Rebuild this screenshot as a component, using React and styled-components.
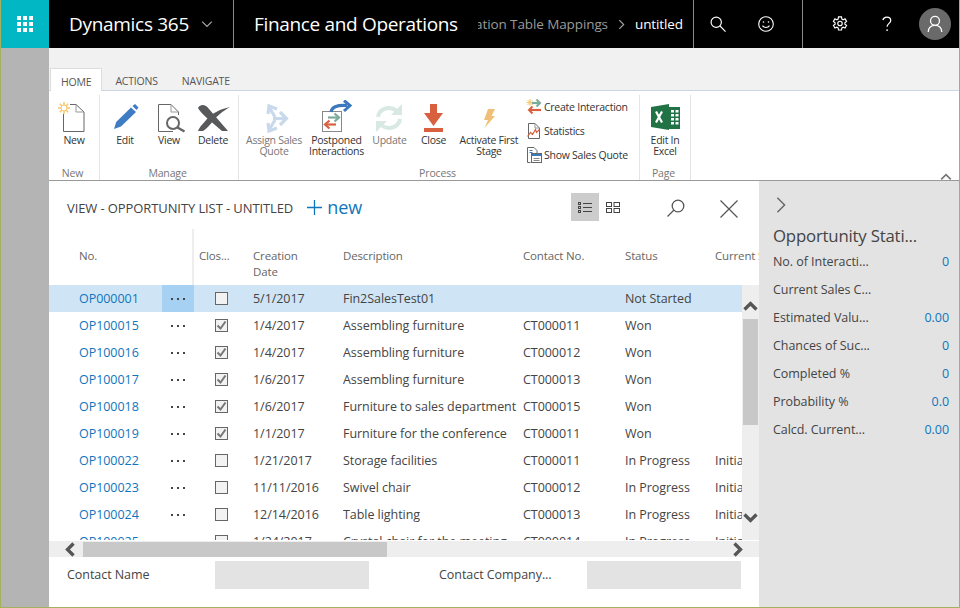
import React from 'react';
import styled, { createGlobalStyle } from 'styled-components';

const GlobalStyle = createGlobalStyle`
  html, body {
    margin: 0;
    padding: 0;
    background: #fff;
  }
  body {
    font-family: "Open Sans", "Noto Sans", "Liberation Sans", sans-serif;
    color: #444;
  }
`;

const Frame = styled.div`
  box-sizing: border-box;
  width: 960px;
  height: 608px;
  display: flex;
  flex-direction: column;
  overflow: hidden;
  border-left: 1px solid #a3b25f;
  border-right: 1px solid #a3b25f;
  border-bottom: 1px solid #a3b25f;
`;

/* top bar */
const TopBar = styled.header`
  display: flex;
  align-items: stretch;
  flex: 0 0 48px;
  background: #000;
  color: #fff;
  margin-right: -1px;
`;

const Waffle = styled.div`
  flex: 0 0 48px;
  background: #00b7c3;
  display: flex;
  align-items: center;
  justify-content: center;
`;

const AppName = styled.div`
  flex: 0 0 185px;
  box-sizing: border-box;
  padding-left: 20px;
  display: flex;
  align-items: center;
  gap: 12px;
  font-size: 19px;
  letter-spacing: -0.3px;
  border-right: 1px solid #8a8a8a;
`;

const ModuleName = styled.div`
  flex: 0 0 244px;
  padding-left: 20px;
  box-sizing: border-box;
  display: flex;
  align-items: center;
  font-size: 19px;
  letter-spacing: -0.33px;
  white-space: nowrap;
`;

const Crumbs = styled.div`
  flex: 0 0 216px;
  box-sizing: border-box;
  padding-right: 10px;
  display: flex;
  align-items: center;
  justify-content: flex-end;
  overflow: hidden;
  white-space: nowrap;
  font-size: 13.5px;
  letter-spacing: -0.1px;
  color: #9a9a9a;
  border-right: 1px solid #8a8a8a;
`;

const CrumbText = styled.span`
  flex: none;
`;

const CrumbSep = styled.span`
  flex: none;
  display: flex;
  margin: 0 8px 0 8px;
`;

const CrumbNow = styled.span`
  flex: none;
  color: #fff;
`;

const TopIcons = styled.div`
  flex: 0 0 109px;
  box-sizing: border-box;
  padding-left: 16px;
  display: flex;
  align-items: center;
  gap: 32px;
  border-right: 1px solid #8a8a8a;
`;

const TopTools = styled.div`
  flex: 1;
  display: flex;
  align-items: center;
`;

const TopSlot = styled.div`
  flex: 0 0 ${(p) => p.$w}px;
  display: flex;
  justify-content: center;
`;

const Avatar = styled.div`
  width: 32px;
  height: 32px;
  margin-left: 21px;
  border-radius: 50%;
  background: #6a6a6a;
  display: flex;
  align-items: center;
  justify-content: center;
`;

const Workspace = styled.div`
  flex: 1;
  display: flex;
  min-height: 0;
`;

const Rail = styled.div`
  flex: 0 0 48px;
  background: #b4b4b4;
`;

const Page = styled.div`
  flex: 1;
  display: flex;
  flex-direction: column;
  min-width: 0;
`;

/* ribbon */
const Ribbon = styled.section`
  flex: 0 0 133px;
  display: flex;
  flex-direction: column;
  box-sizing: border-box;
  background: #f1f1f1;
  padding-top: 20px;
`;

const Tabs = styled.div`
  flex: 0 0 23px;
  min-height: 0;
  box-sizing: border-box;
  display: flex;
  padding-left: 1px;
  border-bottom: 1px solid #cbd6e2;
`;

const Tab = styled.div`
  box-sizing: border-box;
  height: 23px;
  padding: 3px ${(p) => (p.$active ? '10px' : '11px')} 0 ${(p) => (p.$active ? '10px' : '13px')};
  display: flex;
  align-items: center;
  font-size: 10.5px;
  letter-spacing: -0.2px;
  color: #555;
  background: ${(p) => (p.$active ? '#fff' : 'transparent')};
  border-top: ${(p) => (p.$active ? '1px solid #ddd' : '0')};
  border-left: ${(p) => (p.$active ? '1px solid #ddd' : '0')};
  border-right: ${(p) => (p.$active ? '1px solid #ddd' : '0')};
`;

const RibbonBody = styled.div`
  flex: 1;
  min-height: 0;
  display: flex;
  background: #fff;
  border-bottom: 1px solid #999;
  padding-top: 4px;
`;

const Group = styled.div`
  box-sizing: border-box;
  flex: 0 0 ${(p) => p.$w}px;
  display: flex;
  flex-direction: column;
  border-right: 1px solid #e4e4e4;
`;

const GroupItems = styled.div`
  flex: 1;
  display: flex;
  padding-left: ${(p) => p.$pad || 0}px;
`;

const GroupName = styled.div`
  flex: 0 0 13px;
  padding-right: 3px;
  text-align: center;
  font-size: 10.5px;
  letter-spacing: -0.15px;
  line-height: 13px;
  color: #777;
`;

const BigButton = styled.div`
  flex: 0 0 ${(p) => p.$w}px;
  display: flex;
  flex-direction: column;
  align-items: center;
  font-size: 10.5px;
  letter-spacing: -0.28px;
  line-height: 11px;
  color: ${(p) => (p.$off ? '#777' : '#333')};
  text-align: center;
  white-space: nowrap;
`;

const BigIcon = styled.svg`
  display: block;
  flex: none;
  width: 36px;
  height: 34px;
  margin-top: 5px;
  margin-bottom: 1px;
`;

const Stack = styled.div`
  display: flex;
  flex-direction: column;
`;

const StackItem = styled.div`
  height: 24px;
  display: flex;
  align-items: center;
  gap: 2px;
  font-size: 10.5px;
  letter-spacing: -0.25px;
  color: #333;
  white-space: nowrap;
`;

const Collapse = styled.div`
  margin-left: auto;
  margin-right: 7px;
  align-self: flex-end;
  height: 14px;
`;

/* page body */
const Below = styled.div`
  flex: 1;
  display: flex;
  min-height: 0;
`;

const Content = styled.main`
  flex: 0 0 710px;
  display: flex;
  flex-direction: column;
  min-width: 0;
`;

const TitleBar = styled.div`
  flex: 0 0 48px;
  box-sizing: border-box;
  padding: 4px 16px 0 18px;
  display: flex;
  align-items: center;
`;

const ViewTitle = styled.div`
  margin-top: 2px;
  font-size: 13px;
  letter-spacing: -0.1px;
  color: #444;
  white-space: nowrap;
`;

const NewLink = styled.div`
  margin-left: 14px;
  display: flex;
  align-items: center;
  gap: 5px;
  color: #0f75bc;
  font-size: 18px;
  letter-spacing: -0.1px;
`;

const TitleTools = styled.div`
  margin-left: auto;
  display: flex;
  align-items: center;
`;

const ToolButton = styled.div`
  box-sizing: border-box;
  width: 28px;
  height: 28px;
  margin-left: ${(p) => p.$gap || 0}px;
  padding-top: ${(p) => p.$drop || 0}px;
  display: flex;
  align-items: center;
  justify-content: center;
  background: ${(p) => (p.$active ? '#ccc' : 'transparent')};
`;

const cols = '83px 32px 59px 90px 180px 102px 90px 1fr';

const GridHead = styled.div`
  flex: 0 0 56px;
  display: grid;
  grid-template-columns: ${cols};
  padding-left: 30px;
  overflow: hidden;
  font-size: 11.5px;
  letter-spacing: -0.15px;
  line-height: 16px;
  color: #666;
`;

const HeadCell = styled.div`
  box-sizing: border-box;
  padding-top: 19px;
  padding-left: ${(p) => p.$pad || 0}px;
  white-space: ${(p) => (p.$wrap ? 'normal' : 'nowrap')};
  overflow: hidden;
  border-right: ${(p) => (p.$divider ? '2px solid #eee' : '0')};
`;

const GridBody = styled.div`
  flex: 0 0 255px;
  display: flex;
  min-height: 0;
`;

const Rows = styled.div`
  flex: 1;
  min-width: 0;
  overflow: hidden;
`;

const Row = styled.div`
  display: grid;
  grid-template-columns: ${cols};
  height: 27px;
  padding-left: 30px;
  align-items: center;
  font-size: 12.5px;
  letter-spacing: -0.05px;
  color: #444;
  white-space: nowrap;
  background: ${(p) => (p.$selected ? '#cfe5f6' : 'transparent')};
`;

const Cell = styled.div`
  overflow: hidden;
`;

const RecordLink = styled.div`
  color: #0f75bc;
`;

const MoreCell = styled.div`
  height: 27px;
  display: flex;
  align-items: center;
  justify-content: center;
  gap: 4px;
  background: ${(p) => (p.$selected ? '#a6d1f2' : 'transparent')};
`;

const Dot = styled.span`
  width: 2px;
  height: 2px;
  background: #444;
`;

const CheckCell = styled.div`
  display: flex;
  padding-left: 21px;
`;

const CheckBox = styled.div`
  box-sizing: border-box;
  width: 13px;
  height: 13px;
  border: 1px solid #666;
  background: #f2f2f2;
  display: flex;
  align-items: center;
  justify-content: center;
`;

const VScroll = styled.div`
  flex: 0 0 17px;
  box-sizing: border-box;
  padding-bottom: 12px;
  background: #eee;
  display: flex;
  flex-direction: column;
  align-items: center;
`;

const ScrollArrow = styled.div`
  box-sizing: border-box;
  flex: 0 0 ${(p) => p.$size}px;
  padding-top: ${(p) => p.$drop || 0}px;
  display: flex;
  align-items: center;
  justify-content: center;
`;

const VThumb = styled.div`
  flex: 0 0 106px;
  width: 15px;
  background: #c8c8c8;
`;

const VTrack = styled.div`
  flex: 1;
`;

const HScroll = styled.div`
  flex: 0 0 17px;
  box-sizing: border-box;
  background: #eee;
  border-top: 1px solid #fff;
  display: flex;
  align-items: center;
  padding-left: 14px;
  padding-right: 14px;
`;

const HThumb = styled.div`
  flex: 0 0 304px;
  height: 15px;
  margin-left: 5px;
  margin-right: auto;
  background: #c8c8c8;
`;

const Footer = styled.div`
  flex: 1;
  box-sizing: border-box;
  padding: 4px 0 0 18px;
  display: flex;
  align-items: flex-start;
  font-size: 12.5px;
  letter-spacing: -0.05px;
  color: #444;
`;

const FieldLabel = styled.div`
  flex: 0 0 148px;
  line-height: 28px;
  white-space: nowrap;
`;

const FieldValue = styled.div`
  flex: 0 0 154px;
  height: 28px;
  background: #e3e3e3;
  margin-right: ${(p) => p.$gap || 0}px;
`;

/* right panel */
const Side = styled.aside`
  flex: 1;
  box-sizing: border-box;
  background: #e3e3e3;
  padding: 0 10px 0 14px;
`;

const SideToggle = styled.div`
  height: 46px;
  display: flex;
  align-items: center;
  margin-left: -1px;
  padding-top: 1px;
  box-sizing: border-box;
`;

const SideTitle = styled.div`
  font-size: 16.8px;
  letter-spacing: -0.2px;
  line-height: 18px;
  margin-bottom: 2px;
  color: #444;
  white-space: nowrap;
`;

const Stat = styled.div`
  height: 28px;
  display: flex;
  align-items: center;
  justify-content: space-between;
  font-size: 12.5px;
  letter-spacing: -0.05px;
  color: #444;
  white-space: nowrap;
`;

const StatValue = styled.span`
  color: #0f75bc;
`;

/* drawings */
const WaffleIcon = () => (
  <svg width="16" height="16" viewBox="0 0 16 16" fill="#fff">
    {[0, 6, 12].map((y) => [0, 6, 12].map((x) => <rect key={`${x}-${y}`} x={x} y={y} width="4" height="4" />))}
  </svg>
);

const Chevron = ({ dir = 'right', size = 10, color = '#888', sw = 1 }) => {
  const d = {
    right: 'M3 1l4 4-4 4',
    left: 'M7 1L3 5l4 4',
    down: 'M1 3l4 4 4-4',
    up: 'M1 7l4-4 4 4',
  }[dir];
  return (
    <svg width={size} height={size} viewBox="0 0 10 10" fill="none" stroke={color} strokeWidth={sw}>
      <path d={d} />
    </svg>
  );
};

const SearchIcon = ({ flip, color = '#fff', size = 16 }) => (
  <svg width={size} height={size} viewBox="0 0 18 18" fill="none" stroke={color} strokeWidth="1.3">
    <g transform={flip ? 'translate(18 0) scale(-1 1)' : undefined}>
      <circle cx="7" cy="7" r="5.8" />
      <path d="M11 11l6.500 6.500" />
    </g>
  </svg>
);

const SmileIcon = () => (
  <svg width="16" height="16" viewBox="0 0 16 16" fill="none" stroke="#fff" strokeWidth="1.1">
    <circle cx="8" cy="8" r="7.300" />
    <circle cx="5.500" cy="6" r="0.8" fill="#fff" stroke="none" />
    <circle cx="10.500" cy="6" r="0.8" fill="#fff" stroke="none" />
    <path d="M4.500 9.600c1.600 2.500 5.400 2.500 7 0" />
  </svg>
);

const GearIcon = () => (
  <svg width="16" height="16" viewBox="0 0 18 18" fill="none" stroke="#fff" strokeWidth="1.3">
    <path d="M7.300 1h3.400l.4 2.400 1.500.8 2.100-1 1.700 2.900-1.900 1.500v1.600l1.900 1.500-1.700 2.900-2.100-1-1.500.8-.4 2.400H7.300l-.4-2.400-1.500-.8-2.100 1-1.700-2.900 1.900-1.500V7.600L1.600 6.100l1.700-2.900 2.100 1 1.500-.8z" />
    <circle cx="9" cy="8.400" r="2.500" />
  </svg>
);

const HelpIcon = () => (
  <svg width="14" height="16" viewBox="0 0 14 18" fill="none" stroke="#fff" strokeWidth="1.4">
    <path d="M2.400 4.600C2.800 2.500 4.600 1.200 6.800 1.200c2.500 0 4.400 1.500 4.400 3.800 0 3.300-4.100 3.400-4.100 7.200" />
    <circle cx="7.100" cy="15.800" r="1" fill="#fff" stroke="none" />
  </svg>
);

const PersonIcon = () => (
  <svg width="16" height="18" viewBox="0 0 20 22" fill="none" stroke="#fff" strokeWidth="1.600">
    <circle cx="10" cy="7" r="5.600" />
    <path d="M1.500 21c.4-5 3.800-8.200 8.500-8.200s8.100 3.200 8.500 8.200" />
  </svg>
);

const NewIcon = () => (
  <BigIcon viewBox="0 0 36 34">
    <path d="M7.500 14V31.500H28V12L20 4.500H14" fill="#fff" stroke="#666" />
    <path d="M20 4.500V12H28" fill="none" stroke="#999" />
    <g stroke="#f5c66c" strokeWidth="1.500">
      <path d="M8 2v12M2 8h12M3.800 3.800l8.400 8.400M12.200 3.800l-8.400 8.400" />
    </g>
    <circle cx="8" cy="8" r="3" fill="#fff" stroke="#f5c66c" />
  </BigIcon>
);

const EditIcon = () => (
  <BigIcon viewBox="0 0 36 34">
    <path d="M7 29l2.200-7L24 7.500l5 4.600L14 26.600z" fill="#3f7cc4" />
    <path d="M25.500 6l2.500-2 3.500 3.500-2 2.500z" fill="#3f7cc4" />
  </BigIcon>
);

const ViewIcon = () => (
  <BigIcon viewBox="0 0 36 34">
    <path d="M7.500 4.500H20L27.500 12V15M7.500 4.500V31.500H22" fill="none" stroke="#666" />
    <path d="M20 4.500V12H27.500" fill="none" stroke="#999" />
    <circle cx="22" cy="23" r="6" fill="#fff" stroke="#666" strokeWidth="2" />
    <path d="M26.500 27.500l7 4" stroke="#666" strokeWidth="2.400" />
  </BigIcon>
);

const DeleteIcon = () => (
  <BigIcon viewBox="0 0 36 34">
    <path d="M3 8C6 3 11 5 14 9L33 31H27L13 19C9 15 5 12 3 8Z" fill="#58595b" />
    <path d="M3 31C5 26 8 24 12 19C16 14 25 9 35 7C28 11 22 16 19 20C15 25 11 29 8 31Z" fill="#58595b" />
  </BigIcon>
);

const AssignIcon = () => (
  <BigIcon viewBox="0 0 36 34">
    <g fill="none" stroke="#c9d9ec" strokeWidth="3.200">
      <path d="M19 17L13 7" />
      <path d="M12 14l1-8 8 3" />
      <path d="M17 18.500H30" />
      <path d="M24 12l6.500 6.500L24 25" />
      <path d="M19 20L13 30" />
      <path d="M12 23l1 8 8-3" />
    </g>
  </BigIcon>
);

const PostponedIcon = () => (
  <BigIcon viewBox="0 0 36 34">
    <rect x="4.500" y="11.500" width="19" height="20" fill="#fff" stroke="#888" />
    <path d="M10 17.500h10" stroke="#7aab9b" strokeWidth="2.200" />
    <path d="M16.500 13.500l4.500 4-4.500 4" fill="none" stroke="#7aab9b" strokeWidth="2.200" />
    <path d="M18 24.500H8" stroke="#d9603e" strokeWidth="2.200" />
    <path d="M11.500 20.500l-4.500 4 4.500 4" fill="none" stroke="#d9603e" strokeWidth="2.200" />
    <path d="M13 12c1-5 5-7 16-6.500" fill="none" stroke="#3b78bd" strokeWidth="3.200" />
    <path d="M26 0.500l6 5-6 5.500" fill="none" stroke="#3b78bd" strokeWidth="3" />
  </BigIcon>
);

const UpdateIcon = () => (
  <BigIcon viewBox="0 0 36 34">
    <g fill="none" stroke="#d8e8e3" strokeWidth="4">
      <path d="M7 17C8 9 18 5 26 11" />
      <path d="M29 19C28 27 18 31 10 25" />
    </g>
    <path d="M31 4v11H20z" fill="#d8e8e3" />
    <path d="M5 32V21h11z" fill="#d8e8e3" />
  </BigIcon>
);

const CloseIcon = () => (
  <BigIcon viewBox="0 0 36 34">
    <path d="M15 4h7v9h6l-9.500 13L9 13h6z" fill="#d9603e" />
    <rect x="9" y="28" width="19" height="4" fill="#d9603e" />
  </BigIcon>
);

const ActivateIcon = () => (
  <BigIcon viewBox="0 0 36 34">
    <path d="M17 9h7l-3.500 7H24L13.500 28l3.500-8H13z" fill="#f0c078" />
  </BigIcon>
);

const ExcelIcon = () => (
  <BigIcon viewBox="0 0 36 34">
    <path d="M4 7L22 4V30L4 27Z" fill="#217346" />
    <path d="M9 11.500l6 11M15 11.500l-6 11" stroke="#fff" strokeWidth="2.200" />
    <rect x="22" y="7" width="11" height="22" fill="#217346" />
    <g fill="#fff">
      {[10, 14, 18, 22].map((y) => (
        <React.Fragment key={y}>
          <rect x="24" y={y} width="3" height="2.500" />
          <rect x="28.500" y={y} width="3" height="2.500" />
        </React.Fragment>
      ))}
    </g>
  </BigIcon>
);

const InteractionIcon = () => (
  <svg width="16" height="16" viewBox="0 0 16 16">
    <g stroke="#f5c66c" strokeWidth="1">
      <path d="M4 0v7M0.500 3.500h7M1.500 1l5 5M6.500 1l-5 5" />
    </g>
    <path d="M6 4h7" stroke="#7aab9b" strokeWidth="2.200" />
    <path d="M10.500 0.500L14 4l-3.500 3.500" fill="none" stroke="#7aab9b" strokeWidth="2" />
    <path d="M15 11H3" stroke="#d9603e" strokeWidth="2.200" />
    <path d="M6.500 7.500L3 11l3.500 3.500" fill="none" stroke="#d9603e" strokeWidth="2" />
  </svg>
);

const StatisticsIcon = () => (
  <svg width="16" height="16" viewBox="0 0 16 16" fill="none">
    <path d="M2.500 0.500H9L13.500 5V15.500H2.500Z" stroke="#666" />
    <path d="M9 0.500V5H13.500" stroke="#999" />
    <path d="M1.500 13.500l3-4 2 2 3-5 1 3 3-3" stroke="#d9603e" strokeWidth="1.200" />
  </svg>
);

const QuoteIcon = () => (
  <svg width="16" height="16" viewBox="0 0 16 16" fill="none">
    <path d="M4.500 15.500H1.500V0.500H8L11 3.500V6" stroke="#666" />
    <path d="M3.500 3.500h3M3.500 5.500h3" stroke="#3b78bd" />
    <rect x="5.500" y="6.500" width="10" height="9" fill="#fff" stroke="#666" />
    <rect x="6" y="7" width="9" height="2" fill="#3b78bd" />
    <path d="M7.500 11.500h6M7.500 13.500h6" stroke="#888" />
  </svg>
);

const ListIcon = () => (
  <svg width="14" height="11" viewBox="0 0 14 11" fill="none" stroke="#444">
    <path d="M5 1.500h9M5 5.500h9M5 9.500h9" />
    <rect x="0.500" y="0.500" width="2" height="2" />
    <rect x="0.500" y="4.500" width="2" height="2" />
    <rect x="0.500" y="8.500" width="2" height="2" />
  </svg>
);

const TilesIcon = () => (
  <svg width="14" height="11" viewBox="0 0 14 11" fill="none" stroke="#444">
    <rect x="0.500" y="0.500" width="5" height="4" />
    <rect x="8" y="0.500" width="5.500" height="4" />
    <rect x="0.500" y="6.500" width="5" height="4" />
    <rect x="8" y="6.500" width="5.500" height="4" />
  </svg>
);

const CrossIcon = () => (
  <svg width="18" height="18" viewBox="0 0 18 18" fill="none" stroke="#555" strokeWidth="1.200">
    <path d="M0.500 0.500l17 17M17.500 0.500l-17 17" />
  </svg>
);

const rows = [
  { no: 'OP000001', closed: false, date: '5/1/2017', desc: 'Fin2SalesTest01', contact: '', status: 'Not Started', current: '', selected: true },
  { no: 'OP100015', closed: true, date: '1/4/2017', desc: 'Assembling furniture', contact: 'CT000011', status: 'Won', current: '' },
  { no: 'OP100016', closed: true, date: '1/4/2017', desc: 'Assembling furniture', contact: 'CT000012', status: 'Won', current: '' },
  { no: 'OP100017', closed: true, date: '1/6/2017', desc: 'Assembling furniture', contact: 'CT000013', status: 'Won', current: '' },
  { no: 'OP100018', closed: true, date: '1/6/2017', desc: 'Furniture to sales department', contact: 'CT000015', status: 'Won', current: '' },
  { no: 'OP100019', closed: true, date: '1/1/2017', desc: 'Furniture for the conference', contact: 'CT000011', status: 'Won', current: '' },
  { no: 'OP100022', closed: false, date: '1/21/2017', desc: 'Storage facilities', contact: 'CT000011', status: 'In Progress', current: 'Initial' },
  { no: 'OP100023', closed: false, date: '11/11/2016', desc: 'Swivel chair', contact: 'CT000012', status: 'In Progress', current: 'Initial' },
  { no: 'OP100024', closed: false, date: '12/14/2016', desc: 'Table lighting', contact: 'CT000013', status: 'In Progress', current: 'Initial' },
  { no: 'OP100025', closed: false, date: '1/24/2017', desc: 'Crystal chair for the meeting', contact: 'CT000014', status: 'In Progress', current: 'Initial' },
];

const stats = [
  ['No. of Interacti...', '0'],
  ['Current Sales C...', ''],
  ['Estimated Valu...', '0.00'],
  ['Chances of Suc...', '0'],
  ['Completed %', '0'],
  ['Probability %', '0.0'],
  ['Calcd. Current...', '0.00'],
];

const App = () => (
  <Frame>
    <GlobalStyle />
    <TopBar>
      <Waffle>
        <WaffleIcon />
      </Waffle>
      <AppName>
        Dynamics 365
        <Chevron dir="down" size={12} color="#aaa" />
      </AppName>
      <ModuleName>Finance and Operations</ModuleName>
      <Crumbs>
        <CrumbText>Integration Table Mappings</CrumbText>
        <CrumbSep>
          <Chevron size={11} color="#aaa" />
        </CrumbSep>
        <CrumbNow>untitled</CrumbNow>
      </Crumbs>
      <TopIcons>
        <SearchIcon />
        <SmileIcon />
      </TopIcons>
      <TopTools>
        <TopSlot $w={73}>
          <GearIcon />
        </TopSlot>
        <TopSlot $w={22}>
          <HelpIcon />
        </TopSlot>
        <Avatar>
          <PersonIcon />
        </Avatar>
      </TopTools>
    </TopBar>
    <Workspace>
      <Rail />
      <Page>
        <Ribbon>
          <Tabs>
            <Tab $active>HOME</Tab>
            <Tab>ACTIONS</Tab>
            <Tab>NAVIGATE</Tab>
          </Tabs>
          <RibbonBody>
            <Group $w={50}>
              <GroupItems>
                <BigButton $w={50}>
                  <NewIcon />
                  New
                </BigButton>
              </GroupItems>
              <GroupName>New</GroupName>
            </Group>
            <Group $w={139}>
              <GroupItems $pad={3}>
                <BigButton $w={44}>
                  <EditIcon />
                  Edit
                </BigButton>
                <BigButton $w={44}>
                  <ViewIcon />
                  View
                </BigButton>
                <BigButton $w={44}>
                  <DeleteIcon />
                  Delete
                </BigButton>
              </GroupItems>
              <GroupName>Manage</GroupName>
            </Group>
            <Group $w={401}>
              <GroupItems>
                <BigButton $w={70} $off>
                  <AssignIcon />
                  Assign Sales
                  <br />
                  Quote
                </BigButton>
                <BigButton $w={54}>
                  <PostponedIcon />
                  Postponed
                  <br />
                  Interactions
                </BigButton>
                <BigButton $w={51} $off>
                  <UpdateIcon />
                  Update
                </BigButton>
                <BigButton $w={37}>
                  <CloseIcon />
                  Close
                </BigButton>
                <BigButton $w={74}>
                  <ActivateIcon />
                  Activate First
                  <br />
                  Stage
                </BigButton>
                <Stack>
                  <StackItem>
                    <InteractionIcon />
                    Create Interaction
                  </StackItem>
                  <StackItem>
                    <StatisticsIcon />
                    Statistics
                  </StackItem>
                  <StackItem>
                    <QuoteIcon />
                    Show Sales Quote
                  </StackItem>
                </Stack>
              </GroupItems>
              <GroupName>Process</GroupName>
            </Group>
            <Group $w={51}>
              <GroupItems>
                <BigButton $w={50}>
                  <ExcelIcon />
                  Edit In
                  <br />
                  Excel
                </BigButton>
              </GroupItems>
              <GroupName>Page</GroupName>
            </Group>
            <Collapse>
              <Chevron dir="up" size={12} color="#777" sw={1.400} />
            </Collapse>
          </RibbonBody>
        </Ribbon>
        <Below>
          <Content>
            <TitleBar>
              <ViewTitle>VIEW - OPPORTUNITY LIST - UNTITLED</ViewTitle>
              <NewLink>
                <svg width="15" height="15" viewBox="0 0 15 15" stroke="#0f75bc" strokeWidth="1.300">
                  <path d="M7.500 0v15M0 7.500h15" />
                </svg>
                new
              </NewLink>
              <TitleTools>
                <ToolButton $active>
                  <ListIcon />
                </ToolButton>
                <ToolButton>
                  <TilesIcon />
                </ToolButton>
                <ToolButton $gap={35} $drop={2}>
                  <SearchIcon flip color="#555" size={18} />
                </ToolButton>
                <ToolButton $gap={25} $drop={4}>
                  <CrossIcon />
                </ToolButton>
              </TitleTools>
            </TitleBar>
            <GridHead>
              <HeadCell>No.</HeadCell>
              <HeadCell $divider />
              <HeadCell $pad={5}>Clos...</HeadCell>
              <HeadCell $wrap>
                Creation
                <br />
                Date
              </HeadCell>
              <HeadCell>Description</HeadCell>
              <HeadCell>Contact No.</HeadCell>
              <HeadCell>Status</HeadCell>
              <HeadCell>Current Sales Stage</HeadCell>
            </GridHead>
            <GridBody>
              <Rows>
                {rows.map((r) => (
                  <Row key={r.no} $selected={r.selected}>
                    <RecordLink>{r.no}</RecordLink>
                    <MoreCell $selected={r.selected}>
                      <Dot />
                      <Dot />
                      <Dot />
                    </MoreCell>
                    <CheckCell>
                      <CheckBox>
                        {r.closed && (
                          <svg width="11" height="11" viewBox="0 0 11 11" fill="none" stroke="#777" strokeWidth="2">
                            <path d="M1.500 5.500l3 3 5-7" />
                          </svg>
                        )}
                      </CheckBox>
                    </CheckCell>
                    <Cell>{r.date}</Cell>
                    <Cell>{r.desc}</Cell>
                    <Cell>{r.contact}</Cell>
                    <Cell>{r.status}</Cell>
                    <Cell>{r.current}</Cell>
                  </Row>
                ))}
              </Rows>
              <VScroll>
                <ScrollArrow $size={34} $drop={8}>
                  <Chevron dir="up" size={15} color="#555" sw={2.200} />
                </ScrollArrow>
                <VThumb />
                <VTrack />
                <ScrollArrow $size={22}>
                  <Chevron dir="down" size={15} color="#555" sw={2.200} />
                </ScrollArrow>
              </VScroll>
            </GridBody>
            <HScroll>
              <Chevron dir="left" size={15} color="#555" sw={2.200} />
              <HThumb />
              <Chevron size={15} color="#555" sw={2.200} />
            </HScroll>
            <Footer>
              <FieldLabel>Contact Name</FieldLabel>
              <FieldValue $gap={70} />
              <FieldLabel>Contact Company...</FieldLabel>
              <FieldValue />
            </Footer>
          </Content>
          <Side>
            <SideToggle>
              <Chevron size={18} color="#666" sw={0.8} />
            </SideToggle>
            <SideTitle>Opportunity Stati...</SideTitle>
            {stats.map(([label, value]) => (
              <Stat key={label}>
                {label}
                <StatValue>{value}</StatValue>
              </Stat>
            ))}
          </Side>
        </Below>
      </Page>
    </Workspace>
  </Frame>
);

export default App;
